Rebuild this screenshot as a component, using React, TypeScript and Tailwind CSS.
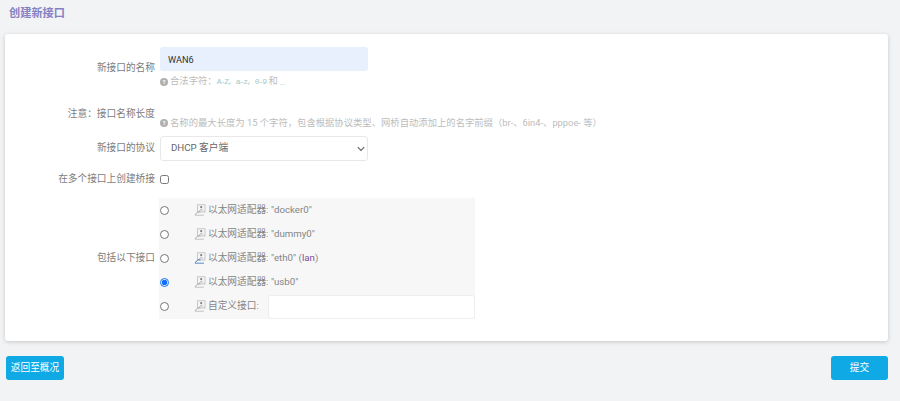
import React from 'react';

const FONT = "font-['Roboto','Noto_Sans_CJK_SC',sans-serif]";

const AdapterIcon: React.FC<{ active?: boolean }> = ({ active }) => (
  <svg width="12" height="12" viewBox="0 0 12 12" fill="none" className="shrink-0">
    <rect x="3.5" y="0.8" width="7.5" height="7.2" fill="#f6f6f6" stroke="#bbb" strokeWidth="0.8" />
    <circle cx="7.2" cy="3.2" r="1.1" fill="#808080" />
    <path d="M5.5 6.6c.3-1.2 3.1-1.2 3.4 0" stroke="#999" strokeWidth="0.8" />
    <path d="M0.8 10.8L4 7.8h2.5" stroke={active ? '#4a7fc0' : '#aaa'} strokeWidth="1" />
    <path d="M1 11.2h9" stroke={active ? '#4a7fc0' : '#bbb'} strokeWidth="0.9" />
  </svg>
);

const Row: React.FC<{ label: string; className?: string; labelClass?: string; children: React.ReactNode }> = ({
  label,
  className,
  labelClass,
  children,
}) => (
  <div className={`flex ${className ?? ''}`}>
    <label className={`w-[150px] shrink-0 text-right text-[#7c7c7c] ${labelClass ?? ''}`}>{label}</label>
    <div className="ml-[5px] flex-1">{children}</div>
  </div>
);

const Help: React.FC<{ children: React.ReactNode }> = ({ children }) => (
  <div className="flex items-center gap-[2px] text-[9.33px] leading-[12px] text-[#bcbcbc]">
    <span className="flex h-[8px] w-[8px] items-center justify-center rounded-full bg-[#b0b0b0] text-[6px] font-bold leading-none text-white">?</span>
    <span>{children}</span>
  </div>
);

const ports = [
  { name: '"docker0"', checked: false },
  { name: '"dummy0"', checked: false },
  { name: '"eth0"', checked: false, net: 'lan' },
  { name: '"usb0"', checked: true },
];

export default function App() {
  return (
    <div className={`${FONT} h-[401px] w-[900px] overflow-hidden bg-[#f1f3f4] text-[9.7px]`}>
      <h2 className="pl-[9px] pt-[7px] text-[11.2px] font-bold leading-[14px] text-[#8580c4]">创建新接口</h2>

      <div className="mx-[5px] mt-[13px] h-[307px] w-[883px] rounded-[3px] bg-white pt-[13px] shadow-[0_1px_4px_rgba(0,0,0,0.18)]">
        <Row label="新接口的名称" className="items-start" labelClass="pt-[14px]">
          <input
            defaultValue="WAN6"
            className="block h-[24px] w-[208px] rounded-[3px] bg-[#e8f0fe] px-[8px] text-[9.2px] text-[#333] outline-none"
          />
          <div className="mt-[4px]">
            <Help>
              合法字符：
              <code className="font-['Liberation_Mono',monospace] text-[8px] tracking-[-1px] text-[#a3c9c9]">A-Z, a-z, 0-9</code> 和{' '}
              <code className="font-['Liberation_Mono',monospace] text-[8px] text-[#a3c9c9]">_</code>
            </Help>
          </div>
        </Row>

        <Row label="注意：接口名称长度" className="mt-[19px] items-start">
          <div className="pt-[10px]">
            <Help>名称的最大长度为 15 个字符，包含根据协议类型、网桥自动添加上的名字前缀（br-、6in4-、pppoe- 等）</Help>
          </div>
        </Row>

        <Row label="新接口的协议" className="mt-[7px] items-center">
          <div className="relative w-[208px]">
            <select className="block h-[25px] w-full appearance-none rounded-[3px] border border-[#e8e8e8] bg-white pl-[10px] text-[9.7px] text-[#666] outline-none">
              <option>DHCP 客户端</option>
            </select>
            <svg
              width="8"
              height="6"
              viewBox="0 0 8 6"
              fill="none"
              className="pointer-events-none absolute right-[3px] top-[10px]"
            >
              <path d="M0.8 1.2L4 4.4l3.2-3.2" stroke="#666" strokeWidth="1.2" />
            </svg>
          </div>
        </Row>

        <Row label="在多个接口上创建桥接" className="mt-[11px] h-[14px] items-center">
          <input type="checkbox" className="m-0 block h-[9px] w-[9px]" />
        </Row>

        <Row label="包括以下接口" className="mt-[12px] items-center">
          <div className="ml-[-1px] w-[316px] bg-[#f7f7f7]">
            {ports.map((p) => (
              <div key={p.name} className="flex h-[24px] items-center">
                <input
                  type="radio"
                  name="port"
                  defaultChecked={p.checked}
                  className="m-0 ml-[1px] block h-[9px] w-[9px] accent-[#0d6efd]"
                />
                <div className="ml-[25px] flex items-center gap-[2px] text-[#858585]">
                  <AdapterIcon active={p.name === '"eth0"'} />
                  <span>
                    以太网适配器: {p.name}
                    {p.net && (
                      <span>
                        {' '}(<span className="text-[#7a4fa0]">{p.net}</span>)
                      </span>
                    )}
                  </span>
                </div>
              </div>
            ))}
            <div className="flex h-[25px] items-center">
              <input type="radio" name="port" className="m-0 ml-[1px] block h-[9px] w-[9px]" />
              <div className="ml-[25px] flex items-center gap-[2px] text-[#858585]">
                <AdapterIcon />
                <span>自定义接口:</span>
              </div>
              <input className="ml-auto h-[24px] w-[207px] rounded-[3px] border border-[#eee] bg-white outline-none" />
            </div>
          </div>
        </Row>
      </div>

      <div className="mx-[6px] mt-[15px] flex w-[882px] justify-between">
        <button className="h-[24px] w-[58px] rounded-[3px] bg-[#0fa9e6] text-[9.7px] text-white">返回至概况</button>
        <button className="h-[24px] w-[57px] rounded-[3px] bg-[#0fa9e6] text-[9.7px] text-white">提交</button>
      </div>
    </div>
  );
}
